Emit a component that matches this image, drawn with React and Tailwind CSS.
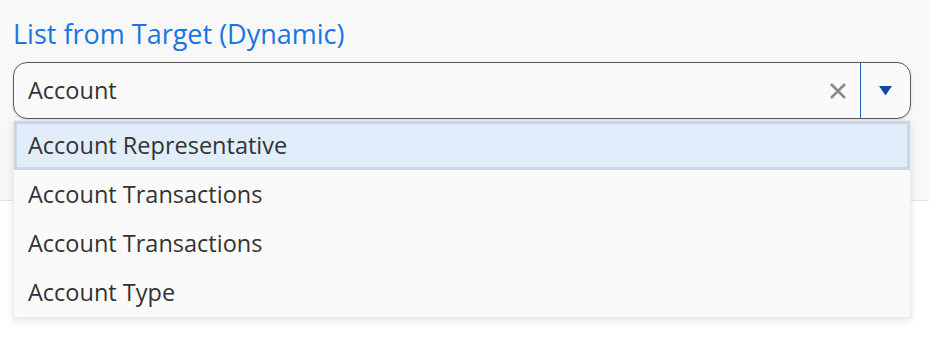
import React from 'react';

const options = [
  'Account Representative',
  'Account Transactions',
  'Account Transactions',
  'Account Type',
];

const App = () => {
  return (
    <div
      className="relative w-[929px] h-[341px] bg-white overflow-hidden"
      style={{ fontFamily: '"Open Sans", "Noto Sans", sans-serif' }}
    >
      {/* panel */}
      <div className="h-[201px] bg-[#f8f8f8] border-b border-[#e4e4e4] pl-[13px] pr-[18px] pt-[16px]">
        <div className="text-[27px] leading-[36px] text-[#1b74e4]">List from Target (Dynamic)</div>
        <div className="mt-[10px] h-[57px] flex items-stretch rounded-[14px] border-[1.5px] border-[#5a5a5a] bg-[#fafafa] shadow-[0_1px_3px_rgba(0,0,0,0.12)]">
          <div className="flex-1 flex items-center pl-[14px] text-[23.5px] text-[#333]">Account</div>
          <button className="w-[44px] flex items-center justify-center text-[#8a8a8a]">
            <svg width="18" height="18" viewBox="0 0 18 18">
              <path d="M2 2 L16 16 M16 2 L2 16" stroke="currentColor" strokeWidth="2.6" />
            </svg>
          </button>
          <div className="w-[1.5px] bg-[#1b62c4]" />
          <div className="w-[49px] flex items-center justify-center">
            <svg width="13" height="10" viewBox="0 0 13 10">
              <path d="M0 0 H13 L6.5 9.5 Z" fill="#0b4aa8" />
            </svg>
          </div>
        </div>
      </div>

      {/* dropdown menu */}
      <div className="absolute left-[13px] top-[120px] w-[898px] bg-[#fafafa] border border-[#ebebeb] shadow-[0_3px_8px_rgba(0,0,0,0.1)] flex flex-col">
        {options.map((o, i) => (
          <div
            key={i}
            className={
              i === 0
                ? 'h-[49px] flex items-center pl-[11px] text-[23.5px] text-[#333] bg-[#e1edfa] border-[3px] border-[#c9d6e6]'
                : 'h-[49px] flex items-center pl-[14px] text-[23.5px] text-[#333]'
            }
          >
            {o}
          </div>
        ))}
      </div>
    </div>
  );
};

export default App;
